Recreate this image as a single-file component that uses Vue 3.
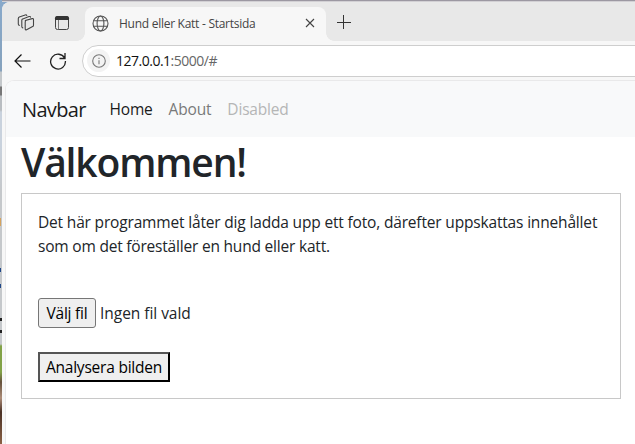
<script setup>
const links = [
  { label: 'Home', kind: 'active' },
  { label: 'About', kind: 'normal' },
  { label: 'Disabled', kind: 'disabled' },
]
</script>

<template>
  <div class="desktop">
    <div class="window">
      <header class="tabstrip">
        <div class="tools">
          <svg class="workspaces" width="18" height="18" viewBox="0 0 18 18" fill="none" stroke="#444" stroke-width="1.1" stroke-linejoin="round" stroke-linecap="round">
            <path d="M8.2 6.5 15.2 4.6Q16.5 4.3 16.5 5.6V11.2Q16.5 12.2 15.6 12.6L9.6 15.7Q8.2 16.3 8.2 14.8V8Q8.2 6.8 9.2 6.3Z" />
            <path d="M5.8 13.9Q4.8 13.8 4.8 12.6V6.3Q4.8 5.2 5.8 4.9L12 2.6Q13.2 2.2 13.5 3.2" />
            <path d="M2.3 11.4Q1.3 11.2 1.3 10.1V4.4Q1.3 3.3 2.3 2.9L8.2 .9Q9.4.5 9.8 1.5" />
          </svg>
          <svg class="tabmenu" width="16" height="16" viewBox="0 0 16 16">
            <rect x="1.5" y="1.5" width="13" height="13" rx="2" fill="none" stroke="#444" stroke-width="1" />
            <path d="M1 5V3.2Q1 1 3.2 1H12.8Q15 1 15 3.2V5Z" fill="#333" />
            <path d="M4.5 5V14.5" stroke="#777" stroke-width="1" />
          </svg>
        </div>
        <div class="tab">
          <svg class="globe" width="17" height="17" viewBox="0 0 17 17" fill="none" stroke="#555" stroke-width="1.1">
            <circle cx="8.5" cy="8.5" r="7.5" />
            <ellipse cx="8.5" cy="8.5" rx="3.4" ry="7.5" />
            <path d="M1.7 5.7H15.3M1.7 11.3H15.3" />
          </svg>
          <span class="title">Hund eller Katt - Startsida</span>
          <svg class="close" width="10" height="10" viewBox="0 0 10 10" stroke="#444" stroke-width="1.1"><path d="M1 1 9 9M9 1 1 9" /></svg>
        </div>
        <svg class="plus" width="14" height="14" viewBox="0 0 14 14" stroke="#333" stroke-width="1"><path d="M6.5 0V14M0 7.5H14" /></svg>
      </header>
      <div class="toolbar">
        <svg class="back" width="17" height="14" viewBox="0 0 17 14" fill="none" stroke="#111" stroke-width="1.2"><path d="M16.5 7H1M7.5.5 1 7 7.5 13.5" /></svg>
        <svg class="reload" width="18" height="18" viewBox="0 0 18 18" fill="none" stroke="#222" stroke-width="1.3"><path d="M15.6 6.2A7.4 7.4 0 1 0 16.4 9M16 1V6.5H10.5" /></svg>
        <div class="address">
          <span class="info">
            <svg width="14" height="14" viewBox="0 0 14 14" fill="none" stroke="#777" stroke-width="1.1"><circle cx="7" cy="7" r="6.3" /><path d="M7 6.2V10.3M7 3.7V5" /></svg>
          </span>
          <span class="url"><b>127.0.0.1</b>:5000/#</span>
        </div>
      </div>
      <div class="page">
        <nav>
          <a class="brand">Navbar</a>
          <a v-for="l in links" :key="l.label" class="link" :class="l.kind">{{ l.label }}</a>
        </nav>
        <h1>Välkommen!</h1>
        <main>
          <p><span class="line1">Det här programmet låter dig ladda upp ett foto, därefter uppskattas innehållet</span><br><span class="line2">som om det föreställer en hund eller katt.</span></p>
          <div class="file"><button class="choose">Välj fil</button><span class="none">Ingen fil vald</span></div>
          <button class="analyse">Analysera bilden</button>
        </main>
      </div>
    </div>
  </div>
</template>

<style>
body { overflow: hidden; }
</style>
<style scoped>
* { box-sizing: border-box; }
svg { flex: none; }
.desktop {
  width: 635px; height: 444px; padding: 2px 0 0 2px;
  font-family: "Open Sans", "Noto Sans", sans-serif; color: #212529; white-space: nowrap;
  background:
    linear-gradient(#1f4788, #1f4788) 0 268px / 1px 4px no-repeat,
    linear-gradient(#1f4788, #1f4788) 0 284px / 1px 4px no-repeat,
    linear-gradient(#222, #222) 0 318px / 2px 3px no-repeat,
    linear-gradient(#222, #222) 0 330px / 2px 3px no-repeat,
    linear-gradient(#d5a35f, #d5a35f) 0 218px / 1px 8px no-repeat,
    linear-gradient(90deg, #9c98a2, #9c98a2) 2px 0 / 633px 1px no-repeat,
    linear-gradient(90deg, #d2d0d4, #d2d0d4) 2px 1px / 633px 1px no-repeat,
    linear-gradient(#88a9cb 0, #86a2bd 71px, #c4c8cb 72px 86px, #777 87px 95px, #b9bdc1 96px 110px, #c9d2dd 112px 145px, #c5c8cb 190px 344px, #82a247 346px 372px, #66513c 382px, #ac8c78 398px, #4a3125 412px, #8a6145 444px);
}
.window { height: 442px; background: #f7f7f7; border-radius: 8px 0 0 0; overflow: hidden; }
.tabstrip { height: 39px; display: flex; background: #e8e8e8; }
.tools { width: 83px; display: flex; padding: 12px 0 0 15px; gap: 19px; }
.tabmenu { margin-top: 1px; }
.tab { position: relative; width: 241px; height: 34px; margin-top: 5px; background: #f7f7f7; border-radius: 8px 8px 0 0; display: flex; align-items: center; padding: 0 11px 2px 7px; }
.tab::before, .tab::after { content: ""; position: absolute; bottom: 0; width: 8px; height: 8px; }
.tab::before { left: -8px; background: radial-gradient(circle at 0 0, #e8e8e8 7.5px, #f7f7f7 8px); }
.tab::after { right: -8px; background: radial-gradient(circle at 100% 0, #e8e8e8 7.5px, #f7f7f7 8px); }
.title { font-size: 12px; letter-spacing: -.27px; margin-left: 10px; color: #444; }
.close { margin-left: auto; }
.plus { margin: 13px 0 0 11px; }
.toolbar { height: 39px; display: flex; align-items: center; padding-left: 12px; }
.reload { margin-left: 18px; }
.address { width: 570px; height: 32px; flex: none; margin-left: 15px; border: 1px solid #cecece; border-radius: 16px; background: #fff; display: flex; align-items: center; padding-left: 4px; }
.info { width: 23px; height: 23px; border-radius: 50%; background: #f3f3f3; display: flex; align-items: center; justify-content: center; }
.url { margin-left: 6px; font-size: 14px; letter-spacing: -.5px; color: #666; }
.url b { font-weight: 400; color: #111; }
.page { margin-left: 3px; height: 364px; border: solid #e9e9ea; border-width: 1px 0 0 1px; border-radius: 9px 0 0 0; overflow: hidden; background: #fff; }
nav { height: 56px; background: #f8f9fa; display: flex; align-items: center; padding-left: 16px; }
.brand { font-size: 20px; letter-spacing: -.65px; width: 87.5px; color: #1b1b1b; }
.link { font-size: 15.5px; letter-spacing: -.18px; margin-right: 16px; }
.active { color: #1b1b1b; } .normal { color: #787979; } .disabled { color: #b5b6b6; }
h1 { margin: 0 0 7px 15px; padding-top: 1px; font-size: 39px; line-height: 48px; font-weight: 600; letter-spacing: -1.15px; }
main { width: 600px; height: 206px; margin-left: 15px; border: 1px solid #c8c8c8; padding: 16px; }
p { margin: 0; font-size: 15.5px; line-height: 24px; letter-spacing: -.17px; }
.line2 { letter-spacing: -.2px; }
.file { display: flex; align-items: center; margin-top: 40px; }
button { font: 15.5px "Open Sans", sans-serif; letter-spacing: -.22px; height: 30px; padding: 0; background: #efefef; color: #000; display: flex; align-items: center; justify-content: center; }
.choose { width: 58px; border: 1px solid #767676; border-radius: 3px; }
.none { margin-left: 4px; font-size: 15.5px; letter-spacing: -.04px; }
.analyse { width: 132px; margin-top: 24px; border: 2px solid; border-color: #555 #000 #000 #555; }
</style>
